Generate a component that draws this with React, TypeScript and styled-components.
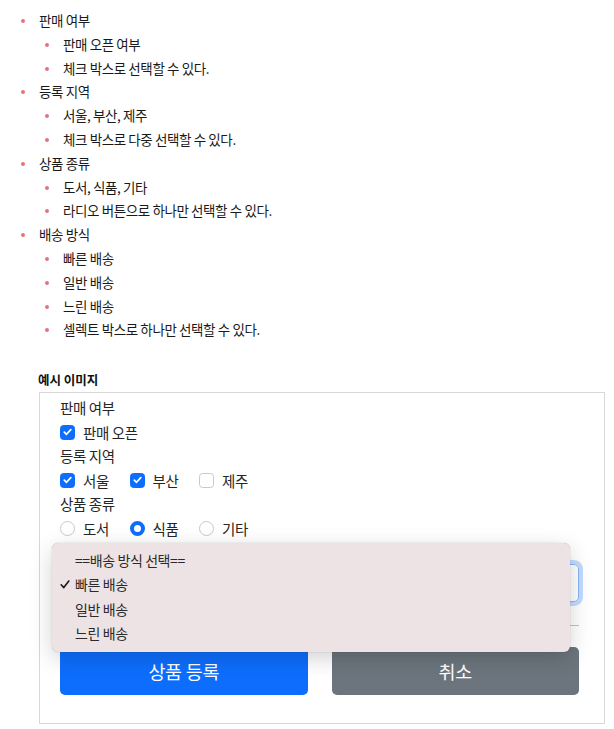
import React from 'react';
import styled, { createGlobalStyle } from 'styled-components';

const GlobalStyle = createGlobalStyle`
  body {
    margin: 0;
    background: #fff;
    color: #212529;
    font-family: "Noto Sans CJK KR", "Noto Sans", sans-serif;
  }
`;

const Page = styled.div`
  width: 614px;
  height: 729px;
  padding-top: 9px;
  box-sizing: border-box;
`;

const List = styled.ul<{ nested?: boolean }>`
  list-style: none;
  margin: 0;
  padding-left: ${p => (p.nested ? '24px' : '39px')};
`;

const Item = styled.li`
  position: relative;
  font-size: 13.5px;
  line-height: 23.8px;
  letter-spacing: -0.4px;
  color: #1a1a1a;

  &::before {
    content: '';
    position: absolute;
    left: -18px;
    top: 10px;
    width: 4px;
    height: 4px;
    border-radius: 50%;
    background: #e5737d;
  }
`;

const Title = styled.div`
  margin: 28px 0 0 38px;
  font-size: 12.5px;
  font-weight: 700;
  line-height: 20px;
  color: #111;
`;

const Box = styled.div`
  margin: 2px 0 0 39px;
  width: 566px;
  height: 332px;
  box-sizing: border-box;
  border: 1px solid #d8d8d8;
  padding: 3px 25px 0 20px;
  font-size: 14.5px;
  letter-spacing: -0.4px;
  color: #262626;
`;

const Label = styled.div`
  line-height: 24px;
`;

const Options = styled.div`
  display: grid;
  grid-template-columns: repeat(3, 69.5px);
  height: 24px;
  align-items: center;
`;

const Option = styled.label`
  display: flex;
  align-items: center;
  gap: 8px;
  white-space: nowrap;
`;

const Check = styled.span<{ on?: boolean }>`
  flex-shrink: 0;
  width: 15px;
  height: 15px;
  box-sizing: border-box;
  border-radius: 3.5px;
  border: 1px solid ${p => (p.on ? '#0d6efd' : '#c9c9c9')};
  background: ${p => (p.on ? '#0d6efd' : '#fff')};
  display: flex;
  align-items: center;
  justify-content: center;
`;

const Radio = styled.span<{ on?: boolean }>`
  flex-shrink: 0;
  width: 15px;
  height: 15px;
  box-sizing: border-box;
  border-radius: 50%;
  border: ${p => (p.on ? '4.5px solid #0d6efd' : '1px solid #c9c9c9')};
  background: #fff;
`;

const SelectWrap = styled.div`
  position: relative;
  margin-top: 24px;
`;

const SelectBox = styled.div`
  height: 38px;
  box-sizing: border-box;
  border: 1px solid #86b7fe;
  border-radius: 5px;
  box-shadow: 0 0 0 4px rgba(13, 110, 253, 0.25);
`;

const Popup = styled.div`
  position: absolute;
  left: -8px;
  top: -21px;
  width: 518px;
  height: 109px;
  box-sizing: border-box;
  padding-top: 5px;
  background: #ede3e4;
  border-radius: 6px;
  box-shadow: 0 0 1px rgba(0, 0, 0, 0.35), 0 6px 22px rgba(0, 0, 0, 0.18);
  z-index: 2;
`;

const PopupRow = styled.div`
  position: relative;
  height: 24.3px;
  line-height: 24.3px;
  padding-left: 23px;
  font-size: 14px;
  color: #2a2a2a;
`;

const Tick = styled.svg`
  position: absolute;
  left: 8px;
  top: 8px;
`;

const Rule = styled.hr`
  margin: 23px 0 0;
  border: 0;
  border-top: 1px solid #c4c4c4;
`;

const Buttons = styled.div`
  display: grid;
  grid-template-columns: 1fr 1fr;
  gap: 24px;
  margin-top: 21px;
`;

const Button = styled.button<{ tone: string }>`
  height: 48px;
  border: 0;
  border-radius: 5px;
  background: ${p => p.tone};
  color: #fff;
  font-family: inherit;
  font-size: 18.5px;
  letter-spacing: -0.3px;
`;

const CheckMark = () => (
  <svg width="9" height="8" viewBox="0 0 9 8">
    <path d="M1.3 4.2 L3.5 6.3 L7.8 1.6" fill="none" stroke="#fff" strokeWidth="1.7" strokeLinecap="round" strokeLinejoin="round" />
  </svg>
);

const spec: [string, string[]][] = [
  ['판매 여부', ['판매 오픈 여부', '체크 박스로 선택할 수 있다.']],
  ['등록 지역', ['서울, 부산, 제주', '체크 박스로 다중 선택할 수 있다.']],
  ['상품 종류', ['도서, 식품, 기타', '라디오 버튼으로 하나만 선택할 수 있다.']],
  ['배송 방식', ['빠른 배송', '일반 배송', '느린 배송', '셀렉트 박스로 하나만 선택할 수 있다.']],
];

const App: React.FC = () => {
  return (
    <Page>
      <GlobalStyle />
      <List>
        {spec.map(([head, subs]) => (
          <Item key={head}>
            {head}
            <List nested>
              {subs.map(s => (
                <Item key={s}>{s}</Item>
              ))}
            </List>
          </Item>
        ))}
      </List>

      <Title>예시 이미지</Title>
      <Box>
        <Label>판매 여부</Label>
        <Options>
          <Option>
            <Check on><CheckMark /></Check>판매 오픈
          </Option>
        </Options>
        <Label>등록 지역</Label>
        <Options>
          <Option><Check on><CheckMark /></Check>서울</Option>
          <Option><Check on><CheckMark /></Check>부산</Option>
          <Option><Check />제주</Option>
        </Options>
        <Label>상품 종류</Label>
        <Options>
          <Option><Radio />도서</Option>
          <Option><Radio on />식품</Option>
          <Option><Radio />기타</Option>
        </Options>

        <SelectWrap>
          <SelectBox />
          <Popup>
            <PopupRow>==배송 방식 선택==</PopupRow>
            <PopupRow>
              <Tick width="10" height="9" viewBox="0 0 10 9">
                <path d="M1.2 4.8 L3.8 7.6 L8.8 1" fill="none" stroke="#1a1a1a" strokeWidth="1.6" strokeLinecap="round" strokeLinejoin="round" />
              </Tick>
              빠른 배송
            </PopupRow>
            <PopupRow>일반 배송</PopupRow>
            <PopupRow>느린 배송</PopupRow>
          </Popup>
        </SelectWrap>

        <Rule />
        <Buttons>
          <Button tone="#0d6efd">상품 등록</Button>
          <Button tone="#6c757d">취소</Button>
        </Buttons>
      </Box>
    </Page>
  );
};

export default App;
